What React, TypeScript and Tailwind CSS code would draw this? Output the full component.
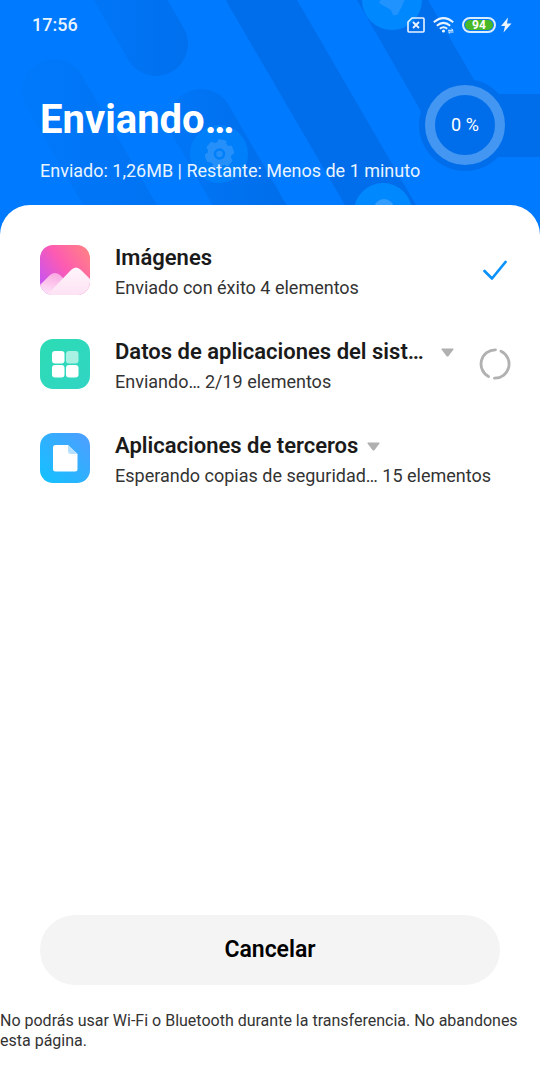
import { useState } from "react";

type Status = "done" | "sending" | "waiting";

interface TransferItem {
  id: string;
  title: string;
  detail: string;
  status: Status;
  expandable: boolean;
}

const ITEMS: TransferItem[] = [
  { id: "images", title: "Imágenes", detail: "Enviado con éxito 4 elementos", status: "done", expandable: false },
  { id: "system", title: "Datos de aplicaciones del sist…", detail: "Enviando… 2/19 elementos", status: "sending", expandable: true },
  { id: "apps", title: "Aplicaciones de terceros", detail: "Esperando copias de seguridad… 15 elementos", status: "waiting", expandable: true },
];

function HeaderArt() {
  return (
    <svg className="absolute inset-0 w-full h-full" viewBox="0 0 540 205" preserveAspectRatio="xMaxYMin slice" aria-hidden="true">
      <defs>
        <linearGradient id="fadeA" gradientUnits="userSpaceOnUse" x1="95" y1="0" x2="190" y2="0">
          <stop offset="0" stopColor="#0076f7" />
          <stop offset="1" stopColor="#0070ee" />
        </linearGradient>
        <linearGradient id="fadeB" gradientUnits="userSpaceOnUse" x1="22" y1="0" x2="155" y2="0">
          <stop offset="0" stopColor="#0079fb" />
          <stop offset="1" stopColor="#0073f2" />
        </linearGradient>
        <linearGradient id="fadeC" gradientUnits="userSpaceOnUse" x1="170" y1="0" x2="286" y2="0">
          <stop offset="0" stopColor="#0076f7" />
          <stop offset="1" stopColor="#006eea" />
        </linearGradient>
      </defs>
      <g strokeWidth="64" strokeLinecap="round">
        <path d="M99 -55L156 44" stroke="url(#fadeA)" />
        <path d="M54 91L154 264" stroke="url(#fadeB)" />
        <path d="M201 121L301 294" stroke="url(#fadeC)" />
      </g>
      <path d="M226 0H297L416 205H345L232 11Q228 5 226 0Z" fill="#006eea" />
      <path d="M357 0H428L500 125L430 127Z" fill="#006eea" />
      <circle cx="465" cy="125" r="46" fill="#006eea" />
      <path d="M465 94H540V157H465Z" fill="#006eea" />
      <circle cx="219" cy="154" r="29" fill="#007ffa" />
      <circle cx="392" cy="0" r="30" fill="#0088ff" />
      <circle cx="383" cy="212" r="29" fill="#0088ff" />
      <path d="M379 3L386 -12H410L402 6L398 14Q396 16 393 15L391 10Z" fill="#2093ff" />
      <circle cx="384" cy="209" r="10" fill="#339cff" />
      <g fill="#2690fa" transform="rotate(12 219.500 154)">
        <circle cx="219.500" cy="154" r="12" />
        <rect x="215" y="139.500" width="9" height="29" rx="2" />
        <rect x="215" y="139.500" width="9" height="29" rx="2" transform="rotate(60 219.500 154)" />
        <rect x="215" y="139.500" width="9" height="29" rx="2" transform="rotate(120 219.500 154)" />
      </g>
      <circle cx="219.500" cy="154" r="4.500" fill="#2690fa" stroke="#007ffa" strokeWidth="2.500" />
    </svg>
  );
}

function StatusIcons() {
  return (
    <div className="flex items-center text-[#e9f4ff]">
      <svg width="18" height="16" viewBox="0 0 18 16" fill="none" stroke="currentColor" aria-label="Sin SIM">
        <path d="M5 1H16Q17 1 17 2V14Q17 15 16 15H2Q1 15 1 14V5Z" strokeWidth="1.600" strokeLinejoin="round" />
        <path d="M6 5L12 11M12 5L6 11" strokeWidth="1.900" />
      </svg>
      <svg className="ml-2" width="21" height="17" viewBox="0 0 21 17" fill="none" stroke="currentColor" aria-label="Wi-Fi">
        <path d="M0.800 5.200Q10.500 -3 20.200 5.200" strokeWidth="2" />
        <path d="M3.800 8.700Q10.500 3 17.200 8.700" strokeWidth="2" />
        <path d="M6.800 11.800Q10.500 8.800 14.200 11.800" strokeWidth="2" />
        <circle cx="10.500" cy="14" r="1.600" fill="currentColor" stroke="none" />
        <path d="M15 13.300H20L18.300 11.500M20.500 15H15.500L17.200 16.600" strokeWidth="1" />
      </svg>
      <div className="ml-2 flex h-4 w-[34px] rounded-full border-2 border-[#d9edff] p-px">
        <div className="flex flex-1 items-center justify-center rounded-full bg-[#48b827] text-xs font-bold leading-none text-white">94</div>
      </div>
      <svg className="ml-1" width="12" height="16" viewBox="0 0 12 16" fill="currentColor" aria-label="Cargando">
        <path d="M8 0.500L1 9H5L3.500 15.500L11.500 6.500H7Z" />
      </svg>
    </div>
  );
}

function ItemIcon({ id }: { id: string }) {
  if (id === "images") {
    return (
      <svg className="size-[50px] shrink-0" viewBox="0 0 50 50" aria-hidden="true">
        <defs>
          <linearGradient id="sky" x1="0" y1="0.700" x2="1" y2="0">
            <stop offset="0" stopColor="#c954ee" />
            <stop offset="0.450" stopColor="#fd5bb2" />
            <stop offset="1" stopColor="#ff8580" />
          </linearGradient>
          <linearGradient id="hillBack" x1="0.600" y1="0" x2="0.200" y2="1">
            <stop offset="0" stopColor="#f9a3df" />
            <stop offset="1" stopColor="#ffe5f8" />
          </linearGradient>
          <linearGradient id="hillFront" x1="0.500" y1="0" x2="0.500" y2="1">
            <stop offset="0" stopColor="#fff5fb" />
            <stop offset="1" stopColor="#fde2f4" />
          </linearGradient>
          <clipPath id="tile">
            <rect width="50" height="50" rx="13" />
          </clipPath>
        </defs>
        <g clipPath="url(#tile)">
          <rect width="50" height="50" fill="url(#sky)" />
          <path d="M0 40L10 30Q15 26 20 30L40 50H0Z" fill="url(#hillBack)" />
          <path d="M7 50L31 25Q36 20 41 25L50 34V50Z" fill="url(#hillFront)" />
        </g>
      </svg>
    );
  }
  if (id === "system") {
    return (
      <svg className="size-[50px] shrink-0" viewBox="0 0 50 50" aria-hidden="true">
        <defs>
          <linearGradient id="mint" x1="0" y1="0" x2="1" y2="1">
            <stop offset="0" stopColor="#2cdcb4" />
            <stop offset="1" stopColor="#31d5c4" />
          </linearGradient>
        </defs>
        <rect width="50" height="50" rx="13" fill="url(#mint)" />
        <rect x="12" y="12" width="12.500" height="12.500" rx="3" fill="#fff" />
        <rect x="26" y="12" width="12.500" height="12.500" rx="3" fill="#a9f1e3" />
        <rect x="12" y="26" width="12.500" height="12.500" rx="3" fill="#fff" />
        <rect x="26" y="26" width="12.500" height="12.500" rx="3" fill="#fff" />
      </svg>
    );
  }
  return (
    <svg className="size-[50px] shrink-0" viewBox="0 0 50 50" aria-hidden="true">
      <defs>
        <linearGradient id="azure" x1="0" y1="1" x2="1" y2="0">
          <stop offset="0" stopColor="#12c2ff" />
          <stop offset="1" stopColor="#4f9dff" />
        </linearGradient>
      </defs>
      <rect width="50" height="50" rx="13" fill="url(#azure)" />
      <path d="M15.500 12H28L37.500 21V36Q37.500 38.500 35 38.500H15.500Q13 38.500 13 36V14.500Q13 12 15.500 12Z" fill="#fff" />
      <path d="M28 12L37.500 21H31Q28 21 28 18Z" fill="#b5e0ff" />
    </svg>
  );
}

function StatusMark({ status }: { status: Status }) {
  if (status === "done") {
    return (
      <svg className="mx-1 shrink-0" width="24" height="20" viewBox="0 0 24 20" fill="none" stroke="#0b92fa" strokeWidth="2.700" strokeLinecap="round" strokeLinejoin="round" aria-label="Completado">
        <path d="M1.500 11L9 18.500L22.500 2" />
      </svg>
    );
  }
  if (status === "sending") {
    return (
      <svg className="shrink-0" width="32" height="32" viewBox="0 0 32 32" fill="none" stroke="#b1b1b1" strokeWidth="2.800" strokeLinecap="round" aria-label="Enviando">
        <path d="M16.500 1.800A14.200 14.200 0 0 0 9.500 28.500" />
        <path d="M22 3.200A14.200 14.200 0 0 1 15.500 30.200" />
      </svg>
    );
  }
  return null;
}

function TransferRow({ item }: { item: TransferItem }) {
  const [open, setOpen] = useState(false);

  return (
    <li className="flex items-center">
      <ItemIcon id={item.id} />
      <div className="ml-[25px] min-w-0 flex-1 pt-1.5">
        <div className="flex items-center">
          <h2 className="text-[22px] leading-[30px] font-semibold whitespace-nowrap text-[#1a1a1a]">{item.title}</h2>
          {item.expandable && (
            <button
              type="button"
              aria-label={`Mostrar ${item.title}`}
              aria-expanded={open}
              onClick={() => setOpen(!open)}
              className={item.status === "sending" ? "ml-4 shrink-0" : "ml-2 shrink-0"}
            >
              <svg className="mx-px" width="13" height="9" viewBox="0 0 12 9" preserveAspectRatio="none" fill="#b0b0b0">
                <path d="M1 0.500H11Q12.300 0.500 11.500 1.500L7 8Q6 9 5 8L0.500 1.500Q-0.300 0.500 1 0.500Z" />
              </svg>
            </button>
          )}
        </div>
        <p className="text-lg leading-[30px] font-normal whitespace-nowrap text-[#333333]">{item.detail}</p>
      </div>
      {item.status !== "waiting" && (
        <div className="ml-3 flex shrink-0">
          <StatusMark status={item.status} />
        </div>
      )}
    </li>
  );
}

export default function App() {
  return (
    <div className="flex min-h-screen flex-col bg-[#007aff] font-['Roboto',sans-serif]">
      <header className="relative h-[205px] overflow-hidden text-white">
        <HeaderArt />
        <div className="relative flex h-[50px] items-center justify-between pr-7 pl-8">
          <time className="text-lg font-medium text-[#e9f4ff]">17:56</time>
          <StatusIcons />
        </div>
        <div className="relative flex justify-between pr-[35px] pl-10">
          <div className="pt-[45px]">
            <h1 className="text-[40px] leading-[50px] font-bold">Enviando…</h1>
            <p className="mt-[15px] text-lg leading-[22px] text-[#e9f4ff]">Enviado: 1,26MB | Restante: Menos de 1 minuto</p>
          </div>
          <div
            role="progressbar"
            aria-valuenow={0}
            aria-label="Progreso"
            className="mt-[35px] flex size-20 shrink-0 items-center justify-center rounded-full border-[10px] border-[#4396f1] text-lg"
          >
            0 %
          </div>
        </div>
      </header>

      <main className="flex flex-1 flex-col rounded-t-[30px] bg-white pt-8">
        <ul className="flex flex-col gap-7 pr-[29px] pl-10">
          {ITEMS.map((item) => (
            <TransferRow key={item.id} item={item} />
          ))}
        </ul>
        <div className="mt-auto px-10">
          <button type="button" className="h-[70px] w-full rounded-full bg-[#f4f4f4] text-[23px] font-semibold text-black">
            Cancelar
          </button>
        </div>
        <p className="mt-[26px] pb-[29px] text-base leading-5 font-normal text-[#333333]">
          No podrás usar Wi-Fi o Bluetooth durante la transferencia. No abandones esta página.
        </p>
      </main>
    </div>
  );
}
